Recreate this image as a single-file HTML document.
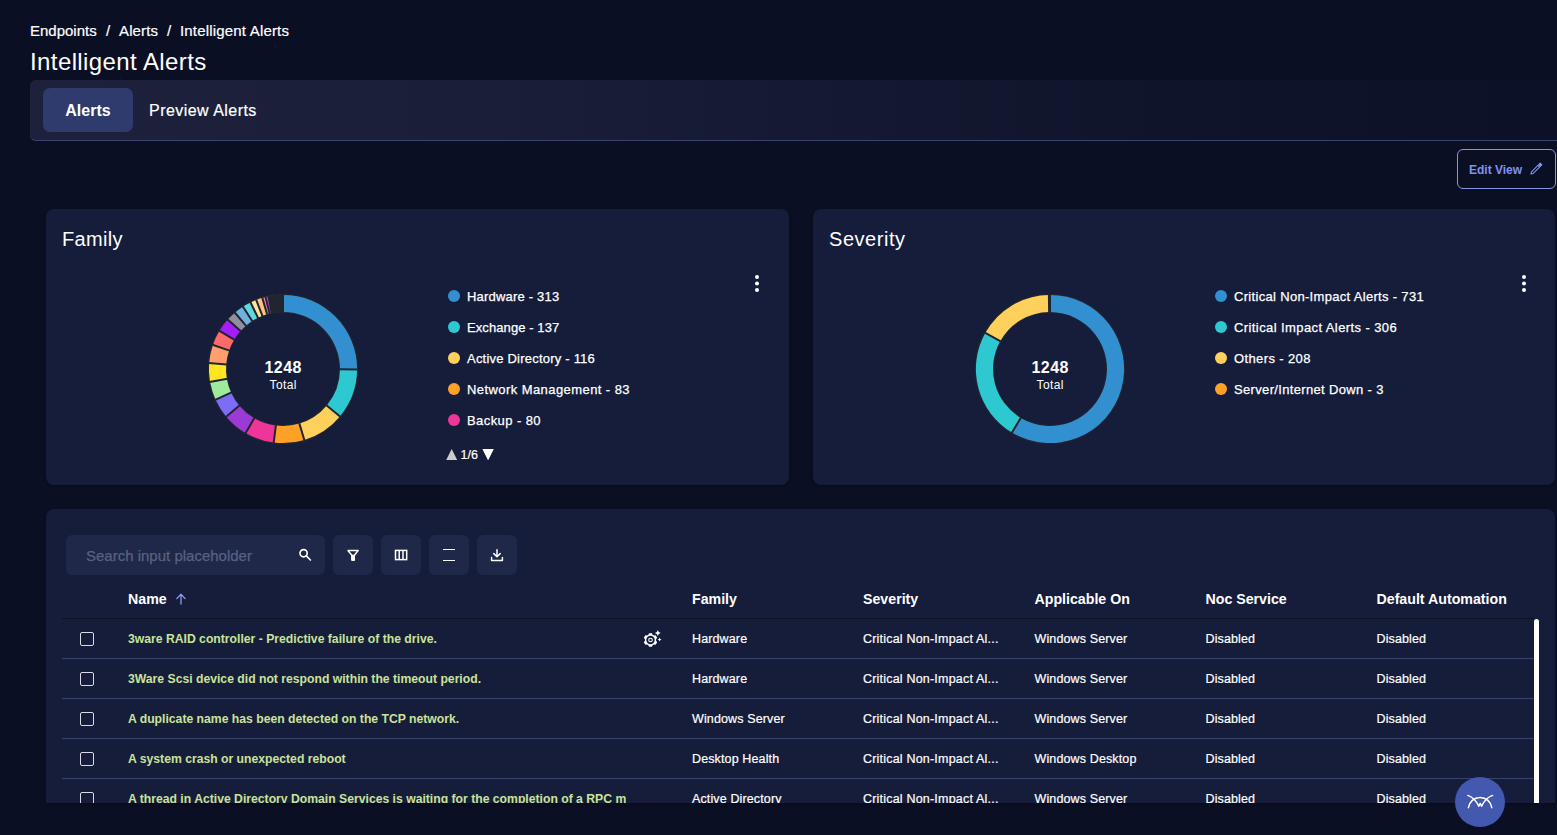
<!DOCTYPE html>
<html lang="en">
<head>
<meta charset="utf-8">
<title>Intelligent Alerts</title>
<style>
*{box-sizing:border-box;margin:0;padding:0}
html,body{width:1557px;height:835px;overflow:hidden;background:#0b0f24;color:#fff;
  font-family:"Liberation Sans",sans-serif;}
.abs{position:absolute}
#root{position:relative;width:1557px;height:835px;overflow:hidden;background:#0b0f24}
.crumbs{position:absolute;left:30px;top:22.300px;-webkit-text-stroke:.2px #fff;height:18px;font-size:15px;line-height:18px;white-space:nowrap;color:#fff}
.crumbs span{position:absolute;top:0}
h1{position:absolute;left:30px;top:47.200px;font-size:24px;letter-spacing:.4px;line-height:30px;font-weight:400;white-space:nowrap}
.tabbar{position:absolute;left:30px;top:80px;width:1527px;height:61px;border-radius:6px 0 0 6px;
  background:linear-gradient(90deg,#1d213c 0%,#1a1e38 30%,#0f142b 75%,#0d1127 100%);border-bottom:1px solid #3a4270}
.tab{position:absolute;top:8px;height:44px;line-height:46px;font-size:16px;white-space:nowrap}
.tab.on{left:13px;width:90px;background:#2f3a6d;border-radius:7px;text-align:center;font-weight:700}
.tab.off{left:119px;letter-spacing:.46px;-webkit-text-stroke:.2px #fff}
.editbtn{position:absolute;left:1457px;top:149px;width:99px;height:40px;border:1px solid #8596e6;border-radius:6px;color:#8093f1;
  font-size:12px;font-weight:700;line-height:40px;padding-left:11px;white-space:nowrap}
.card{position:absolute;background:#151d3a;border-radius:8px;box-shadow:0 1px 3px rgba(0,0,0,.35)}
.card h2{position:absolute;left:16px;top:17px;letter-spacing:.3px;font-size:20px;line-height:26px;font-weight:400;white-space:nowrap}
.leg{position:absolute;font-size:13px;line-height:16px;white-space:nowrap;color:#fff;margin-top:.7px;-webkit-text-stroke:.25px #fff}
.leg i{position:absolute;left:-19px;top:1.500px;width:12px;height:12px;border-radius:50%}
.kebab{position:absolute;width:4px;height:4px;border-radius:50%;background:#fff;box-shadow:0 6.5px 0 #fff,0 13px 0 #fff}
.search{position:absolute;left:20px;top:26px;width:259px;height:40px;border-radius:6px;background:#1f2848;color:#596183;-webkit-text-stroke:.25px #596183;font-size:15px;line-height:42px;padding-left:20px}
.tbtn{position:absolute;top:26px;width:40px;height:40px;border-radius:6px;background:#1f2848}
.th{position:absolute;top:81px;font-size:14.2px;font-weight:700;line-height:18px;white-space:nowrap}
.row{position:absolute;left:16px;width:1472px;height:40px;border-bottom:1px solid #37426f}
.row div{position:absolute;top:12px;font-size:12.5px;letter-spacing:.13px;line-height:16px;white-space:nowrap;color:#fff;-webkit-text-stroke:.2px #fff}
.row .nm{left:66px;color:#cbe29b;font-weight:700;font-size:12.2px;letter-spacing:0;-webkit-text-stroke:0;width:498px;overflow:hidden}
.row .cb{left:18.200px;top:13.200px;width:13.500px;height:13.500px;border:1.800px solid #dadae2;border-radius:2px}
.pager{position:absolute;left:414.500px;top:237.500px;height:16px;font-size:12.5px;line-height:16px;white-space:nowrap;-webkit-text-stroke:.2px #fff}
.gear{position:absolute;left:580px;top:11px}
.fab{position:absolute;left:1455px;top:777px;width:50px;height:50px;border-radius:50%;background:#4358af}
.tbtn svg{display:block}
</style>
</head>
<body>
<div id="root">
  <div class="crumbs"><span style="left:0">Endpoints</span><span style="left:76px">/</span><span style="left:89px;letter-spacing:.13px">Alerts</span><span style="left:137px">/</span><span style="left:150px;letter-spacing:.18px">Intelligent Alerts</span></div>
  <h1>Intelligent Alerts</h1>
  <div class="tabbar"><div class="tab on">Alerts</div><div class="tab off">Preview Alerts</div></div>
  <div class="editbtn">Edit View<svg class="abs" style="left:72px;top:11.900px" width="13" height="13" viewBox="0 0 14 14" fill="none" stroke="#8596ee" stroke-width="1.150" stroke-linejoin="round"><path d="M1 13L3.480 12.360L10.300 5.540L8.460 3.700L1.640 10.520Z"/><path d="M11.200 4.640L12.740 3.100L10.900 1.260L9.360 2.800Z" fill="#8596ee"/></svg></div>

  <div class="card" id="fam" style="left:46px;top:209px;width:743px;height:276px">
    <h2>Family</h2>
    <svg class="abs" style="left:0;top:0" width="743" height="276" viewBox="0 0 743 276">
<circle cx="237" cy="160" r="65.60" fill="none" stroke="#22252f" stroke-width="19.40"/>
<path d="M237.00 85.90A74.1 74.1 0 0 1 311.10 160.37L294.00 160.29A57 57 0 0 0 237.00 103.00Z" fill="#3390d0"/>
<path d="M311.10 160.37A74.1 74.1 0 0 1 293.92 207.44L280.79 196.49A57 57 0 0 0 294.00 160.29Z" fill="#2ec8d0"/>
<path d="M293.92 207.44A74.1 74.1 0 0 1 258.33 230.96L253.41 214.59A57 57 0 0 0 280.79 196.49Z" fill="#ffd15c"/>
<path d="M258.33 230.96A74.1 74.1 0 0 1 227.70 233.51L229.84 216.55A57 57 0 0 0 253.41 214.59Z" fill="#ffa126"/>
<path d="M227.70 233.51A74.1 74.1 0 0 1 199.63 223.99L208.25 209.22A57 57 0 0 0 229.84 216.55Z" fill="#f0359a"/>
<path d="M199.63 223.99A74.1 74.1 0 0 1 180.24 207.63L193.34 196.64A57 57 0 0 0 208.25 209.22Z" fill="#9b3bd4"/>
<path d="M180.24 207.63A74.1 74.1 0 0 1 169.57 190.73L185.13 183.64A57 57 0 0 0 193.34 196.64Z" fill="#7c6cf8"/>
<path d="M169.57 190.73A74.1 74.1 0 0 1 164.03 172.87L180.87 169.90A57 57 0 0 0 185.13 183.64Z" fill="#9eea9e"/>
<path d="M164.03 172.87A74.1 74.1 0 0 1 163.14 154.06L180.18 155.43A57 57 0 0 0 180.87 169.90Z" fill="#ffe620"/>
<path d="M163.14 154.06A74.1 74.1 0 0 1 166.94 135.88L183.11 141.44A57 57 0 0 0 180.18 155.43Z" fill="#ff9f6e"/>
<path d="M166.94 135.88A74.1 74.1 0 0 1 173.48 121.84L188.14 130.64A57 57 0 0 0 183.11 141.44Z" fill="#ff6b6b"/>
<path d="M173.48 121.84A74.1 74.1 0 0 1 181.76 110.61L194.51 122.01A57 57 0 0 0 188.14 130.64Z" fill="#a21ffa"/>
<path d="M181.76 110.61A74.1 74.1 0 0 1 188.88 103.65L199.98 116.66A57 57 0 0 0 194.51 122.01Z" fill="#8f8fa1"/>
<path d="M188.88 103.65A74.1 74.1 0 0 1 196.97 97.64L206.21 112.03A57 57 0 0 0 199.98 116.66Z" fill="#6eb0e0"/>
<path d="M196.97 97.64A74.1 74.1 0 0 1 204.52 93.40L212.01 108.77A57 57 0 0 0 206.21 112.03Z" fill="#5fd8de"/>
<path d="M204.52 93.40A74.1 74.1 0 0 1 210.20 90.91L216.39 106.86A57 57 0 0 0 212.01 108.77Z" fill="#ffe2a0"/>
<path d="M210.20 90.91A74.1 74.1 0 0 1 216.33 88.84L221.10 105.26A57 57 0 0 0 216.39 106.86Z" fill="#ffc47a"/>
<path d="M216.33 88.84A74.1 74.1 0 0 1 219.58 87.98L223.60 104.60A57 57 0 0 0 221.10 105.26Z" fill="#f07cc4"/>
<path d="M219.58 87.98A74.1 74.1 0 0 1 222.35 87.36L225.73 104.12A57 57 0 0 0 223.60 104.60Z" fill="#b06ae0"/>
<path d="M222.35 87.36A74.1 74.1 0 0 1 224.00 87.05L227.00 103.88A57 57 0 0 0 225.73 104.12Z" fill="#6f7fd0"/>
<path d="M224.00 87.05A74.1 74.1 0 0 1 225.65 86.77L228.27 103.67A57 57 0 0 0 227.00 103.88Z" fill="#d0a0e0"/>
<path d="M225.65 86.77A74.1 74.1 0 0 1 226.98 86.58L229.29 103.52A57 57 0 0 0 228.27 103.67Z" fill="#80c0a0"/>
<path d="M226.98 86.58A74.1 74.1 0 0 1 228.31 86.41L230.31 103.39A57 57 0 0 0 229.29 103.52Z" fill="#c0c080"/>
<path d="M228.31 86.41A74.1 74.1 0 0 1 229.31 86.30L231.08 103.31A57 57 0 0 0 230.31 103.39Z" fill="#80a0c0"/>
<path d="M229.31 86.30A74.1 74.1 0 0 1 230.31 86.20L231.85 103.23A57 57 0 0 0 231.08 103.31Z" fill="#c08080"/>
<path d="M230.31 86.20A74.1 74.1 0 0 1 231.31 86.12L232.62 103.17A57 57 0 0 0 231.85 103.23Z" fill="#a0a0a0"/>
<path d="M231.31 86.12A74.1 74.1 0 0 1 232.31 86.05L233.39 103.11A57 57 0 0 0 232.62 103.17Z" fill="#80c0c0"/>
<path d="M232.31 86.05A74.1 74.1 0 0 1 232.98 86.01L233.91 103.08A57 57 0 0 0 233.39 103.11Z" fill="#c0a080"/>
<path d="M232.98 86.01A74.1 74.1 0 0 1 233.65 85.98L234.42 103.06A57 57 0 0 0 233.91 103.08Z" fill="#a080c0"/>
<path d="M233.65 85.98A74.1 74.1 0 0 1 234.32 85.95L234.94 103.04A57 57 0 0 0 234.42 103.06Z" fill="#80a080"/>
<path d="M234.32 85.95A74.1 74.1 0 0 1 234.99 85.93L235.45 103.02A57 57 0 0 0 234.94 103.04Z" fill="#c080a0"/>
<path d="M234.99 85.93A74.1 74.1 0 0 1 235.66 85.91L235.97 103.01A57 57 0 0 0 235.45 103.02Z" fill="#8080c0"/>
<path d="M235.66 85.91A74.1 74.1 0 0 1 235.99 85.91L236.23 103.01A57 57 0 0 0 235.97 103.01Z" fill="#a0c080"/>
<path d="M235.99 85.91A74.1 74.1 0 0 1 236.33 85.90L236.48 103.00A57 57 0 0 0 236.23 103.01Z" fill="#c0c0c0"/>
<path d="M236.33 85.90A74.1 74.1 0 0 1 236.66 85.90L236.74 103.00A57 57 0 0 0 236.48 103.00Z" fill="#80c0e0"/>
<path d="M236.66 85.90A74.1 74.1 0 0 1 237.00 85.90L237.00 103.00A57 57 0 0 0 236.74 103.00Z" fill="#e0c080"/>
<path d="M237.00 103.50L237.00 85.40M293.50 160.28L311.60 160.38M280.40 196.17L294.31 207.76M253.26 214.11L258.48 231.44M229.91 216.05L227.64 234.01M208.50 208.79L199.38 224.42M193.72 196.32L179.85 207.95M185.59 183.43L169.12 190.94M181.36 169.81L163.53 172.95M180.68 155.47L162.64 154.02M183.58 141.61L166.46 135.71M188.57 130.90L173.06 121.58M194.88 122.34L181.39 110.28M200.31 117.04L188.55 103.27M206.48 112.45L196.70 97.22M212.23 109.22L204.30 92.95M216.57 107.32L210.02 90.45M221.24 105.74L216.19 88.36M223.71 105.08L219.46 87.49M225.83 104.61L222.25 86.87M227.09 104.38L223.91 86.56M228.35 104.17L225.58 86.28M229.36 104.02L226.91 86.09M230.37 103.89L228.25 85.92M231.13 103.81L229.26 85.80M231.90 103.73L230.26 85.70M232.66 103.67L231.27 85.62M233.43 103.61L232.28 85.55M233.94 103.58L232.95 85.51M234.45 103.56L233.63 85.48M234.96 103.54L234.30 85.45M235.47 103.52L234.98 85.43M235.98 103.51L235.65 85.41M236.23 103.51L235.99 85.41M236.49 103.50L236.33 85.40M236.74 103.50L236.66 85.40" fill="none" stroke="#22252f" stroke-width="2"/>
      <text x="237.200" y="164" text-anchor="middle" font-size="16" font-weight="700" letter-spacing=".45" fill="#fff">1248</text>
      <text x="237.200" y="179.500" text-anchor="middle" font-size="12" letter-spacing=".36" fill="#fff">Total</text>
    </svg>
    <div class="leg" style="letter-spacing:0.193px;left:421px;top:79px"><i style="background:#3390d0"></i>Hardware - 313</div>
    <div class="leg" style="letter-spacing:0.086px;left:421px;top:110px"><i style="background:#2ec8d0"></i>Exchange - 137</div>
    <div class="leg" style="letter-spacing:0.214px;left:421px;top:141px"><i style="background:#ffd15c"></i>Active Directory - 116</div>
    <div class="leg" style="letter-spacing:0.426px;left:421px;top:172px"><i style="background:#ffa126"></i>Network Management - 83</div>
    <div class="leg" style="letter-spacing:0.418px;left:421px;top:203px"><i style="background:#f0359a"></i>Backup - 80</div>
    <svg class="abs" style="left:400.400px;top:239.600px" width="11.400" height="11.400" viewBox="0 0 12 12"><path d="M0 12L6 0L12 12Z" fill="#ccc"/></svg><div class="pager">1/6</div><svg class="abs" style="left:436px;top:239.600px" width="12.200" height="11.400" viewBox="0 0 12 12"><path d="M0 0L12 0L6 12Z" fill="#fff"/></svg>
    <div class="kebab" style="left:709px;top:66px"></div>
  </div>
  <div class="card" id="sev" style="left:813px;top:209px;width:742px;height:276px">
    <h2 style="letter-spacing:.55px">Severity</h2>
    <svg class="abs" style="left:0;top:0" width="743" height="276" viewBox="0 0 743 276">
<circle cx="237" cy="160" r="65.60" fill="none" stroke="#22252f" stroke-width="19.40"/>
<path d="M237.00 85.90A74.1 74.1 0 1 1 198.99 223.61L207.76 208.93A57 57 0 1 0 237.00 103.00Z" fill="#3390d0"/>
<path d="M198.99 223.61A74.1 74.1 0 0 1 172.28 123.92L187.21 132.25A57 57 0 0 0 207.76 208.93Z" fill="#2ec8d0"/>
<path d="M172.28 123.92A74.1 74.1 0 0 1 235.88 85.91L236.14 103.01A57 57 0 0 0 187.21 132.25Z" fill="#ffd15c"/>
<path d="M235.88 85.91A74.1 74.1 0 0 1 237.00 85.90L237.00 103.00A57 57 0 0 0 236.14 103.01Z" fill="#ffa126"/>
<path d="M237.00 103.50L237.00 85.40M208.01 208.50L198.73 224.03M187.65 132.49L171.84 123.68M236.15 103.51L235.87 85.41" fill="none" stroke="#22252f" stroke-width="2"/>
      <text x="237.200" y="164" text-anchor="middle" font-size="16" font-weight="700" letter-spacing=".45" fill="#fff">1248</text>
      <text x="237.200" y="179.500" text-anchor="middle" font-size="12" letter-spacing=".36" fill="#fff">Total</text>
    </svg>
    <div class="leg" style="letter-spacing:0.316px;left:421px;top:79px"><i style="background:#3390d0"></i>Critical Non-Impact Alerts - 731</div>
    <div class="leg" style="letter-spacing:0.407px;left:421px;top:110px"><i style="background:#2ec8d0"></i>Critical Impact Alerts - 306</div>
    <div class="leg" style="letter-spacing:0.375px;left:421px;top:141px"><i style="background:#ffd15c"></i>Others - 208</div>
    <div class="leg" style="letter-spacing:0.337px;left:421px;top:172px"><i style="background:#ffa126"></i>Server/Internet Down - 3</div>
    <div class="kebab" style="left:709px;top:66px"></div>
  </div>
  <div class="card" id="tbl" style="left:46px;top:509px;width:1509px;height:294px;border-radius:8px 8px 0 0;overflow:hidden">
    <div class="search">Search input placeholder</div>
    <svg class="abs" style="left:252px;top:39px" width="14" height="14" viewBox="0 0 14 14" fill="none" stroke="#fff" stroke-width="1.650"><circle cx="5.600" cy="5.200" r="3.600"/><path d="M8.300 7.900L12.400 12" stroke-linecap="round"/></svg>
    <div class="tbtn" style="left:287px"><svg width="40" height="40" viewBox="0 0 40 40" fill="none" stroke="#fff" stroke-width="1.500" stroke-linejoin="round"><path d="M15 15.500h10.200l-4 5v4.500h-2.200v-4.500z"/><path d="M19 20.500h2.200v4.500h-2.200z" fill="#fff"/></svg></div>
    <div class="tbtn" style="left:335px"><svg width="40" height="40" viewBox="0 0 40 40" fill="none" stroke="#fff" stroke-width="1.500"><rect x="14.500" y="15.400" width="11.200" height="9.200"/><path d="M18.200 15.400v9.200M22 15.400v9.200"/></svg></div>
    <div class="tbtn" style="left:383px"><svg width="40" height="40" viewBox="0 0 40 40" fill="none" stroke="#fff" stroke-width="1.200"><path d="M14 14.500h12M14 25.500h12"/></svg></div>
    <div class="tbtn" style="left:431px"><svg width="40" height="40" viewBox="0 0 40 40" fill="none" stroke="#fff" stroke-width="1.500" stroke-linecap="round" stroke-linejoin="round"><path d="M20 14.800v6.700M16.800 18.600l3.200 3.200 3.200-3.200M14.600 22.500v3h10.800v-3"/></svg></div>
    <div class="th" style="left:82px">Name</div>
    <svg class="abs" style="left:129px;top:84px" width="12" height="12" viewBox="0 0 12 12" fill="none" stroke="#8b9cf0" stroke-width="1.300" stroke-linecap="round" stroke-linejoin="round"><path d="M6 11V1.500M1.800 5.600L6 1.300l4.200 4.300"/></svg>
    <div class="th" style="left:646px">Family</div>
    <div class="th" style="left:817px">Severity</div>
    <div class="th" style="left:988.500px">Applicable On</div>
    <div class="th" style="left:1159.500px">Noc Service</div>
    <div class="th" style="left:1330.500px">Default Automation</div>
    <div class="abs" style="left:16px;top:109px;width:1472px;height:1px;background:#0f1222"></div>
    <div class="row" style="top:110px"><div class="cb"></div><div class="nm">3ware RAID controller - Predictive failure of the drive.</div><svg class="gear" width="22" height="18" viewBox="0 0 22 18"><g><path d="M7.04 3.15L9.96 3.15L10.56 4.79L11.98 5.61L13.70 5.32L15.16 7.84L14.04 9.18L14.04 10.82L15.16 12.16L13.70 14.68L11.98 14.39L10.56 15.21L9.96 16.85L7.04 16.85L6.44 15.21L5.02 14.39L3.30 14.68L1.84 12.16L2.96 10.82L2.96 9.18L1.84 7.84L3.30 5.32L5.02 5.61L6.44 4.79ZM4.30 10a4.2 4.2 0 1 0 8.4 0a4.2 4.2 0 1 0 -8.4 0Z" fill="#fff" fill-rule="evenodd"/><circle cx="8.500" cy="10" r="1.800" fill="none" stroke="#fff" stroke-width="1.100"/></g><path d="M15.800 0l0.900 2.100 2.100 0.900-2.100 0.900-0.900 2.100-0.900-2.100-2.100-0.900 2.100-0.900z" fill="#fff"/><path d="M17.600 7.600l0.600 1.400 1.400 0.600-1.400 0.600-0.600 1.400-0.600-1.400-1.400-0.600 1.400-0.600z" fill="#fff"/></svg><div style="left:630px">Hardware</div><div style="left:801px;letter-spacing:.2px">Critical Non-Impact Al...</div><div style="left:972.500px">Windows Server</div><div style="left:1143.500px">Disabled</div><div style="left:1314.500px">Disabled</div></div>
    <div class="row" style="top:150px"><div class="cb"></div><div class="nm">3Ware Scsi device did not respond within the timeout period.</div><div style="left:630px">Hardware</div><div style="left:801px;letter-spacing:.2px">Critical Non-Impact Al...</div><div style="left:972.500px">Windows Server</div><div style="left:1143.500px">Disabled</div><div style="left:1314.500px">Disabled</div></div>
    <div class="row" style="top:190px"><div class="cb"></div><div class="nm">A duplicate name has been detected on the TCP network.</div><div style="left:630px">Windows Server</div><div style="left:801px;letter-spacing:.2px">Critical Non-Impact Al...</div><div style="left:972.500px">Windows Server</div><div style="left:1143.500px">Disabled</div><div style="left:1314.500px">Disabled</div></div>
    <div class="row" style="top:230px"><div class="cb"></div><div class="nm">A system crash or unexpected reboot</div><div style="left:630px">Desktop Health</div><div style="left:801px;letter-spacing:.2px">Critical Non-Impact Al...</div><div style="left:972.500px">Windows Desktop</div><div style="left:1143.500px">Disabled</div><div style="left:1314.500px">Disabled</div></div>
    <div class="row" style="top:270px"><div class="cb"></div><div class="nm">A thread in Active Directory Domain Services is waiting for the completion of a RPC made to a remote domain controller</div><div style="left:630px">Active Directory</div><div style="left:801px;letter-spacing:.2px">Critical Non-Impact Al...</div><div style="left:972.500px">Windows Server</div><div style="left:1143.500px">Disabled</div><div style="left:1314.500px">Disabled</div></div>
    <div class="abs" style="left:1488px;top:110px;width:5px;height:190px;background:#fff;border-radius:3px 3px 0 0"></div>
  </div>
  <div class="fab"><svg width="50" height="50" viewBox="0 0 50 50" fill="none" stroke="#fff" stroke-width="1.500" stroke-linecap="round" stroke-linejoin="round"><path d="M13.400 30.700A11.800 11.800 0 0 1 36.800 30.700"/><path d="M12.800 18.400C18.500 20.500 21.600 24.500 23.800 29.200l1.400-2.800 1.400 2.800C28.800 24.500 31.900 20.500 37.600 18.400"/></svg></div>
</div>
</body>
</html>
